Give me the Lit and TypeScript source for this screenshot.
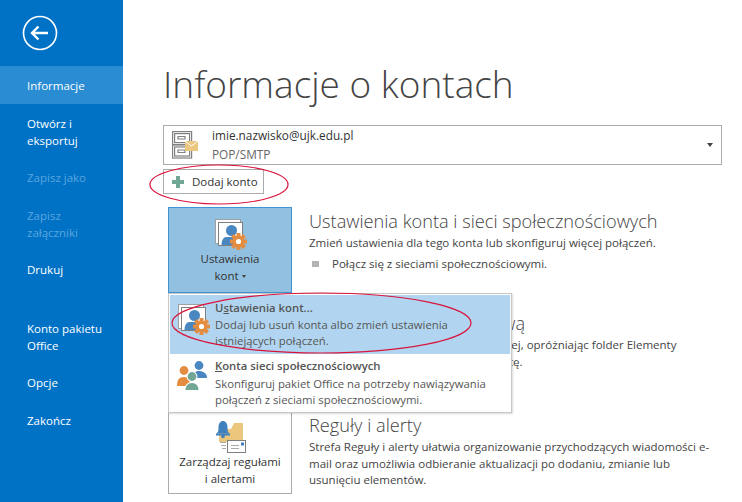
import { LitElement, html, css, svg } from "lit";
import { customElement } from "lit/decorators.js";

const accountIcon = svg`
  <rect x="1.5" y="1.5" width="25" height="24" fill="#fff" stroke="#a0a0a0" stroke-width="1"/>
  <rect x="4.5" y="4.5" width="24" height="23" fill="#fff" stroke="#808080" stroke-width="1"/>
  <circle cx="17.5" cy="12.5" r="5.5" fill="#4a86c0"/>
  <path d="M7.5 27c0-5 2-8 5-8h9v8z" fill="#4a86c0"/>
  <g fill="#e48c3f">
    <circle cx="24.5" cy="23.5" r="5.8"/>
    <rect x="22.5" y="15" width="4" height="17"/>
    <rect x="16" y="21.5" width="17" height="4"/>
    <rect x="22.5" y="15" width="4" height="17" transform="rotate(45 24.5 23.5)"/>
    <rect x="22.5" y="15" width="4" height="17" transform="rotate(-45 24.5 23.5)"/>
  </g>
  <circle cx="24.5" cy="23.5" r="2.6" fill="#fff"/>`;

const peopleIcon = svg`
  <circle cx="22" cy="4.5" r="4.4" fill="#4a86c0"/>
  <path d="M16 17c0-5 2-7 6-7s8 2 8 7z" fill="#4a86c0"/>
  <circle cx="7" cy="9.5" r="4.4" fill="#e48c3f"/>
  <path d="M0 25c0-6 2-9 7-9s6 3 6 9z" fill="#e48c3f"/>
  <circle cx="15" cy="15.5" r="5.4" fill="#fff"/>
  <circle cx="15" cy="15.5" r="4.4" fill="#72a796"/>
  <path d="M7.5 29c0-5 3-8 7.500-8s7.500 3 7.500 8z" fill="#fff"/>
  <path d="M8.500 29c0-4 2.500-7 6.500-7s6.500 3 6.500 7z" fill="#72a796"/>`;

@customElement("app-root")
export class AppRoot extends LitElement {
  static styles = css`
    :host { display: block; width: 742px; height: 502px; overflow: hidden; position: relative; background: #fff;
      font-family: "Open Sans", "Noto Sans", sans-serif; color: #444; font-size: 11.5px; }
    .page { display: flex; height: 502px; }
    .side { width: 123px; flex: none; background: #0072c6; color: #fff; line-height: 17px; font-size: 11.5px; }
    .backbox { height: 66px; padding: 15px 0 0 22px; box-sizing: border-box; }
    .backbox svg { display: block; }
    .item { padding: 11px 10px 9px 27px; }
    .item.one { height: 38px; box-sizing: border-box; }
    .item.cur { background: #2a8dd4; }
    .item.off { color: #5aa6de; }
    .item.gap { margin-top: 21px; }
    .main { flex: 1; min-width: 0; padding: 0 20px 0 40px; }
    h1 { margin: 0; height: 125px; box-sizing: border-box; padding-top: 60px; font-weight: 300; font-size: 37px; line-height: 48px; color: #444; white-space: nowrap; }
    .combo { height: 40px; box-sizing: border-box; border: 1px solid #ababab; display: flex; align-items: center; padding: 0 8px 0 8px; }
    .combo .ic { margin-right: 14px; flex: none; display: block; }
    .combo .t { flex: 1; line-height: 19px; }
    .combo .mail { color: #333; font-size: 11.8px; }
    .combo .kind { color: #666; font-size: 11.8px; }
    .caret { width: 0; height: 0; border: 3px solid transparent; border-top: 4px solid #444; border-bottom: 0; }
    .add { margin-top: 4px; width: 101px; height: 25px; box-sizing: border-box; border: 1px solid #ababab; display: flex; align-items: center; padding-left: 8px; gap: 8px; color: #333; font-size: 11.5px; }
    .sec { margin: 0 0 0 5px; display: grid; grid-template-columns: 124px 1fr; column-gap: 17px; height: 102px; }
    .secs { margin-top: 13px; }
    .tile { height: 86px; box-sizing: border-box; border: 1px solid #ababab; display: flex; flex-direction: column; align-items: center; text-align: center; color: #333; line-height: 17px; padding-top: 10px; font-size: 11.5px; }
    .tile svg { display: block; margin-bottom: -1px; }
    .tile.on { background: #92c0e0; border-color: #3e94d4; }
    .tile.last { height: 83px; padding-top: 8px; }
    .tile.last svg { margin-bottom: 0; }
    .tile .arrow { display: inline-block; width: 0; height: 0; border: 2.5px solid transparent; border-top: 3px solid #444; border-bottom: 0; margin: 0 0 2px 3px; }
    h2 { margin: 0; font-weight: 300; font-size: 18.2px; line-height: 27px; color: #444; white-space: nowrap; }
    .desc { margin: 0; line-height: 16.5px; color: #444; font-size: 11.5px; }
    .sec .txt { padding-top: 1px; }
    .bul { display: flex; align-items: center; margin-top: 4px; line-height: 16px; }
    .bul i { width: 7px; height: 6px; background: #b3b3b3; margin: 0 13px 0 3px; }
    .menu { position: absolute; left: 168px; top: 293px; width: 344px; height: 120px; box-sizing: border-box; background: #fff; border: 1px solid #c6c6c6; box-shadow: 1px 1px 2px rgba(0,0,0,.15); padding: 1px; z-index: 2; font-size: 11.3px; }
    .mi { height: 58.5px; display: flex; box-sizing: border-box; padding: 6px 0 0 7px; }
    .mi.hi { background: #b1d5f0; }
    .mi + .mi { padding-top: 5px; }
    .mi + .mi span { margin-top: 2px; }
    .mi svg { flex: none; margin: 2px 5px 0 0; display: block; }
    .mi b { display: block; font-weight: 600; color: #555; line-height: 16px; margin-top: -1px; }
    .mi b u { text-decoration: underline; }
    .mi span { display: block; color: #555; line-height: 16px; margin-top: 1px; }
    .ring { position: absolute; left: 0; top: 0; z-index: 3; pointer-events: none; }
  `;

  render() {
    return html`
      <div class="page">
        <nav class="side">
          <div class="backbox">
            <svg width="36" height="36" viewBox="0 0 36 36" fill="none" stroke="#fff">
              <circle cx="18" cy="18" r="16.500" stroke-width="1.6"/>
              <path d="M10 18h16M16.500 11.500 10 18l6.500 6.500" stroke-width="2.400"/>
            </svg>
          </div>
          <div class="item one cur">Informacje</div>
          <div class="item">Otwórz i<br>eksportuj</div>
          <div class="item one off">Zapisz jako</div>
          <div class="item off">Zapisz<br>załączniki</div>
          <div class="item one">Drukuj</div>
          <div class="item gap">Konto pakietu<br>Office</div>
          <div class="item one">Opcje</div>
          <div class="item one">Zakończ</div>
        </nav>
        <main class="main">
          <h1>Informacje o kontach</h1>
          <div class="combo">
            <svg class="ic" width="26" height="28" viewBox="0 0 26 28">
              <g fill="#fff" stroke="#808080" stroke-width="1.2">
                <rect x="0.600" y="0.600" width="19" height="13"/>
                <rect x="0.600" y="14" width="19" height="13"/>
                <rect x="2.600" y="2.600" width="15" height="9"/>
                <rect x="2.600" y="16" width="15" height="9"/>
                <path d="M6 5.500h7v2.500H6zM6 19h7v2.500H6z"/>
              </g>
              <rect x="13" y="10" width="13" height="10" fill="#ecc77f"/>
              <path d="M13 10l6.500 5 6.500-5" fill="none" stroke="#fff" stroke-width="1"/>
            </svg>
            <div class="t">
              <div class="mail">imie.nazwisko@ujk.edu.pl</div>
              <div class="kind">POP/SMTP</div>
            </div>
            <div class="caret"></div>
          </div>
          <div class="add">
            <svg width="12" height="12" viewBox="0 0 12 12"><path d="M4 0h4v4h4v4H8v4H4V8H0V4h4z" fill="#72a796"/></svg>
            Dodaj konto
          </div>
          <div class="secs">
            <section class="sec">
              <div class="tile on">
                <svg width="33" height="33" viewBox="0 0 33 33">${accountIcon}</svg>
                <div>Ustawienia<br>kont<span class="arrow"></span></div>
              </div>
              <div class="txt">
                <h2>Ustawienia konta i sieci społecznościowych</h2>
                <p class="desc">Zmień ustawienia dla tego konta lub skonfiguruj więcej połączeń.</p>
                <div class="bul"><i></i>Połącz się z sieciami społecznościowymi.</div>
              </div>
            </section>
            <section class="sec">
              <div class="tile"></div>
              <div class="txt">
                <h2>Czyścić skrzynkę pocztową</h2>
                <p class="desc">Ogranicz rozmiar tej skrzynki pocztowej, opróżniając folder Elementy<br>usunięte i archiwizując starszą e-pocztę.</p>
              </div>
            </section>
            <section class="sec">
              <div class="tile last">
                <svg width="32" height="33" viewBox="0 0 32 33">
                  <path d="M5 9h12l3-6h9v19H5z" fill="#edc67e"/>
                  <path d="M2 13.500c2.500-1 2.500-3 2.500-6.500S6.500 1 9 1s4.500 2.500 4.500 6 0 5.500 2.500 6.500z" fill="#3f81bd"/>
                  <rect x="2" y="13.500" width="14" height="2" fill="#3f81bd"/>
                  <circle cx="9" cy="16.500" r="1.800" fill="#3f81bd"/>
                  <rect x="13.500" y="20.500" width="18" height="12" fill="#fff" stroke="#7f7f7f"/>
                  <path d="M17 25.500h8M17 28.500h8" stroke="#aaa"/>
                  <rect x="27" y="22.500" width="3" height="3" fill="#3f81bd"/>
                  <path d="M6 22.500h6M7 25.500h5M8 28.500h4" stroke="#aaa"/>
                </svg>
                <div>Zarządzaj regułami<br>i alertami</div>
              </div>
              <div class="txt">
                <h2>Reguły i alerty</h2>
                <p class="desc">Strefa Reguły i alerty ułatwia organizowanie przychodzących wiadomości e-<br>mail oraz umożliwia odbieranie aktualizacji po dodaniu, zmianie lub<br>usunięciu elementów.</p>
              </div>
            </section>
          </div>
        </main>
      </div>
      <div class="menu">
        <div class="mi hi">
          <svg width="33" height="33" viewBox="0 0 33 33">${accountIcon}</svg>
          <div><b>U<u>s</u>tawienia kont...</b><span>Dodaj lub usuń konta albo zmień ustawienia<br>istniejących połączeń.</span></div>
        </div>
        <div class="mi">
          <svg width="33" height="33" viewBox="0 0 33 33">${peopleIcon}</svg>
          <div><b><u>K</u>onta sieci społecznościowych</b><span>Skonfiguruj pakiet Office na potrzeby nawiązywania<br>połączeń z sieciami społecznościowymi.</span></div>
        </div>
      </div>
      <svg class="ring" width="742" height="502" fill="none" stroke="#d9143c" stroke-width="1.2">
        <ellipse cx="219" cy="184.500" rx="69" ry="19.500"/>
        <ellipse cx="321.500" cy="323" rx="149.500" ry="30"/>
      </svg>
    `;
  }
}
